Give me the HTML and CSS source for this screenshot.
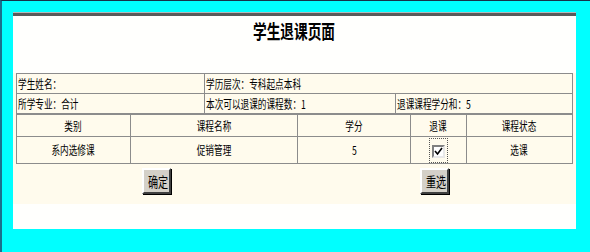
FILE: index.html
```html
<!DOCTYPE html>
<html lang="zh-CN">
<head>
    <meta charset="UTF-8">
    <title>学生退课页面</title>
    <link rel="stylesheet" href="styles.css">
</head>
<body>

<div class="panel">
    <h1 class="title"><span class="sq mid">学生退课页面</span></h1>

    <form class="drop-form">
        <table class="info">
            <tr>
                <td class="c1"><span class="sq">学生姓名：</span></td>
                <td colspan="2"><span class="sq">学历层次：专科起点本科</span></td>
            </tr>
            <tr>
                <td class="c1"><span class="sq">所学专业：合计</span></td>
                <td class="c2"><span class="sq">本次可以退课的课程数：1</span></td>
                <td><span class="sq">退课课程学分和：5</span></td>
            </tr>
        </table>

        <table class="courses">
            <tr class="head">
                <td class="k1"><span class="sq mid">类别</span></td>
                <td class="k2"><span class="sq mid">课程名称</span></td>
                <td class="k3"><span class="sq mid">学分</span></td>
                <td class="k4"><span class="sq mid">退课</span></td>
                <td><span class="sq mid">课程状态</span></td>
            </tr>
            <tr class="row">
                <td><span class="sq mid">系内选修课</span></td>
                <td><span class="sq mid">促销管理</span></td>
                <td><span class="sq mid">5</span></td>
                <td>
                    <span class="focus"><span class="check"><svg width="9" height="9" viewBox="0 0 9 9"><path d="M1 4 L3.5 7 L8 1" fill="none" stroke="#000" stroke-width="1.6"/></svg></span></span>
                </td>
                <td><span class="sq mid">选课</span></td>
            </tr>
        </table>

        <div class="actions">
            <button type="submit" class="btn"><span class="sq mid">确定</span></button>
            <button type="reset" class="btn btn-reset"><span class="sq mid">重选</span></button>
        </div>
    </form>
    <div class="panel-foot"></div>
</div>

</body>
</html>
```

FILE: styles.css
```css
html, body {
    margin: 0;
    height: 100%;
}
body {
    box-sizing: border-box;
    padding: 12px 14px 0 11px;
    background-color: #00ffff;
    border-top: 1px solid #17324a;
    border-left: 2px solid #1b6f8c;
    font-family: "Noto Sans CJK SC", "Liberation Sans", sans-serif;
    color: #000;
}
.panel {
    width: 563px;
    background-color: #fffffd;
    border-top: 3px solid #5a5a5a;
    box-shadow: 0 -1px 0 #b8b8b8;
}
.panel-foot {
    height: 25px;
}
.sq {
    display: inline-block;
    transform: scaleX(0.72);
    transform-origin: left center;
    white-space: nowrap;
}
.sq.mid {
    transform-origin: center center;
}
.title {
    margin: 0;
    padding: 5px 0 32px;
    height: 20px;
    font-size: 19px;
    line-height: 20px;
    font-weight: bold;
    text-align: center;
}
.drop-form {
    margin: 0;
    background-color: #fffbed;
    padding: 0 3px 10px;
}
table {
    width: 557px;
    border-collapse: collapse;
    font-size: 12px;
}
td {
    border: 1px solid #8c8c8c;
    padding: 0 1px;
    line-height: 14px;
}
.info td {
    height: 19px;
}
.info .c1 {
    width: 185px;
}
.info .c2 {
    width: 188px;
}
.courses td {
    text-align: center;
}
.courses .head td {
    height: 21px;
}
.courses .row td {
    height: 26px;
}
.courses .k1 {
    width: 111px;
}
.courses .k2 {
    width: 164px;
}
.courses .k3 {
    width: 110px;
}
.courses .k4 {
    width: 53px;
}
.focus {
    display: inline-block;
    padding: 6px 2px 4px;
    border: 1px dotted #555;
    vertical-align: middle;
}
.check {
    display: block;
    width: 9px;
    height: 9px;
    background-color: #fff;
    border: 2px solid;
    border-color: #808080 #e8e8e8 #e8e8e8 #808080;
}
.check svg {
    display: block;
}
.actions {
    display: flex;
    padding: 4px 0 0 126px;
}
.btn {
    width: 29px;
    height: 26px;
    padding: 0;
    font-size: 14px;
    font-family: inherit;
    line-height: 16px;
    background-color: #d4d0c8;
    border: 2px solid;
    border-color: #ffffff #404040 #404040 #ffffff;
    box-shadow: 1px 1px 0 #000;
    cursor: pointer;
}
.btn-reset {
    margin-left: 249px;
}
```
